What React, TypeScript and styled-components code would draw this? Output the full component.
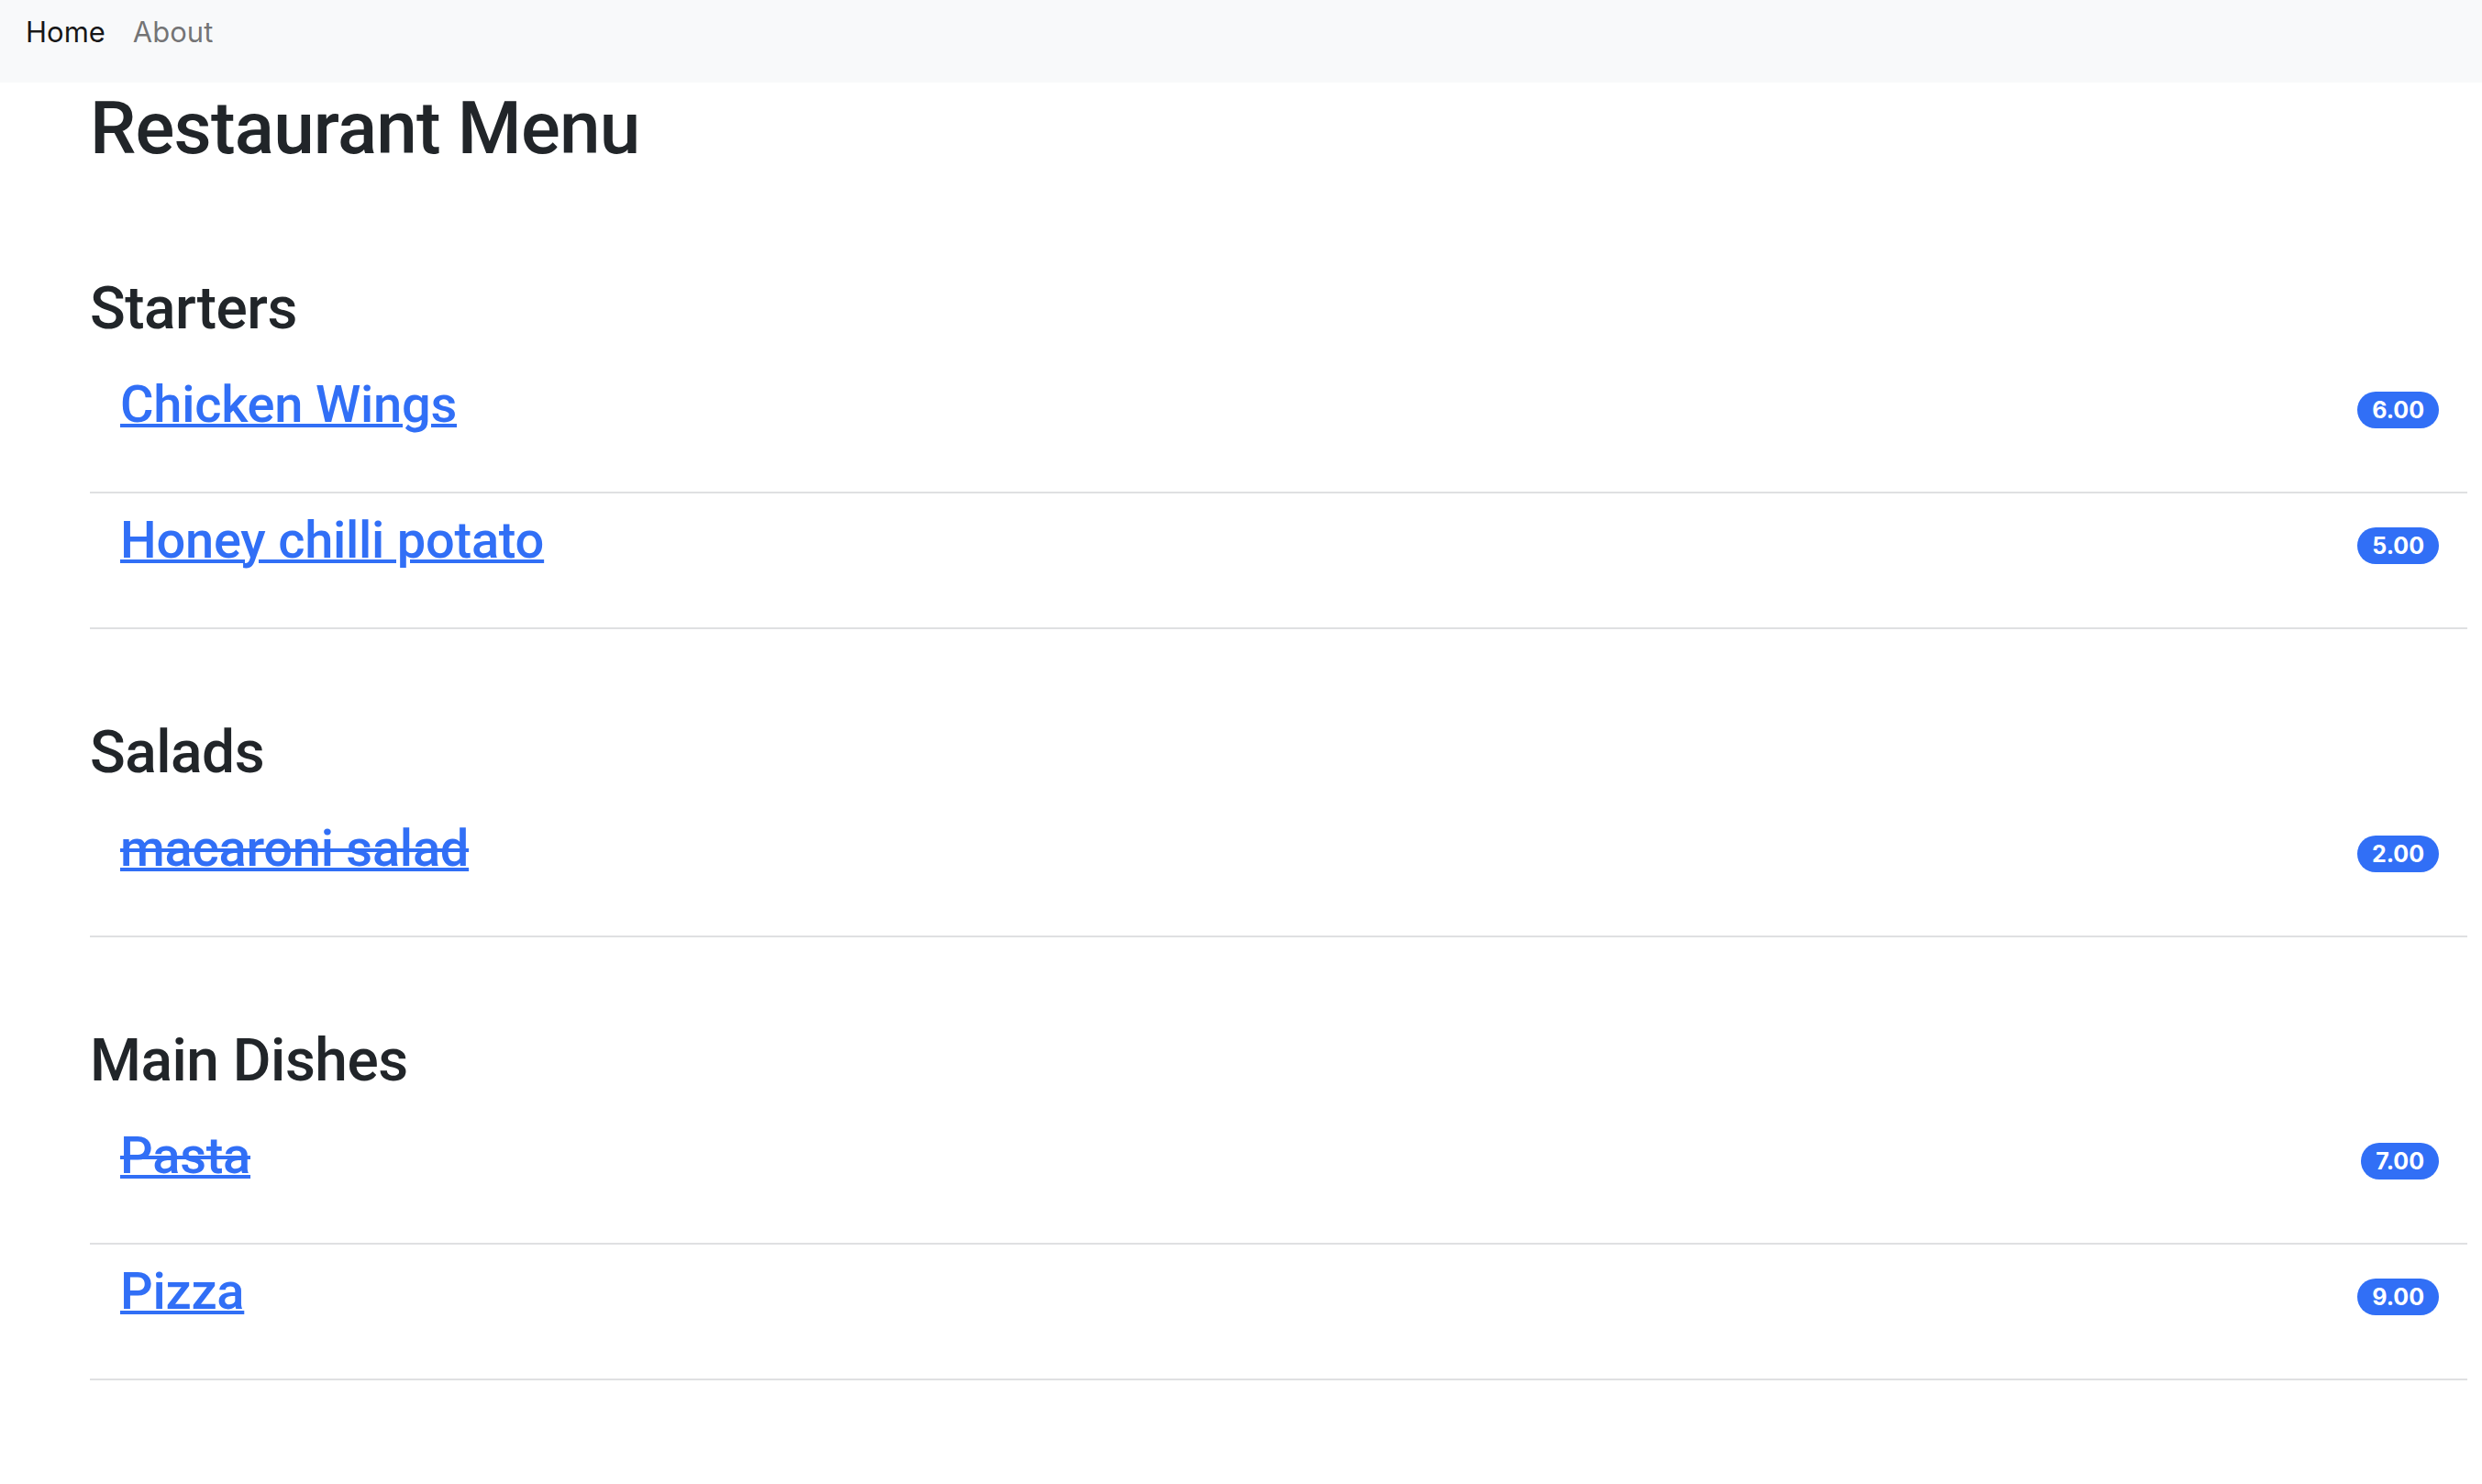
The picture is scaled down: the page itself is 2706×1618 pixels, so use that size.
import React from "react";
import styled, { createGlobalStyle } from "styled-components";

const GlobalStyle = createGlobalStyle`
  html, body { margin: 0; padding: 0; background: #ffffff; }
  body {
    font-family: Inter, "Noto Sans", "Liberation Sans", sans-serif;
    color: #212529;
  }
  * { box-sizing: border-box; }
`;

const headingFont = `Roboto, Inter, "Liberation Sans", sans-serif`;

const NavBar = styled.nav`
  height: 90px;
  background: #f8f9fa;
  display: flex;
  align-items: flex-start;
  padding: 17px 0 0 28px;
  gap: 30px;
`;

const NavLink = styled.a<{ $active?: boolean }>`
  font-size: 31px;
  line-height: 36px;
  text-decoration: none;
  color: ${(p) => (p.$active ? "rgba(0,0,0,0.92)" : "rgba(0,0,0,0.55)")};
  cursor: pointer;
`;

const Main = styled.main`
  padding: 0 16px 80px 98px;
`;

const Title = styled.h1`
  font-family: ${headingFont};
  font-size: 80px;
  font-weight: 500;
  line-height: 96px;
  letter-spacing: -0.8px;
  margin: 2px 0 14px 0;
`;

const Section = styled.section`
  padding-top: 97px;
`;

const SectionTitle = styled.h2`
  font-family: ${headingFont};
  font-size: 64px;
  font-weight: 500;
  line-height: 1.2;
  letter-spacing: -0.5px;
  margin: 0 0 14px 0;
`;

const List = styled.ul`
  list-style: none;
  margin: 0;
  padding: 0;
`;

const Item = styled.li`
  height: 148px;
  border-bottom: 2px solid #dfe0e2;
  padding: 18px 31px 0 33px;
`;

const ItemRow = styled.div`
  display: flex;
  align-items: flex-start;
  justify-content: space-between;
`;

const ItemName = styled.h3`
  font-family: ${headingFont};
  font-size: 56px;
  font-weight: 500;
  line-height: 1.2;
  letter-spacing: -0.25px;
  margin: 0;
`;

const ItemLink = styled.a<{ $unavailable?: boolean }>`
  color: #316ff6;
  text-decoration: ${(p) => (p.$unavailable ? "underline line-through" : "underline")};
  text-decoration-thickness: 4px;
  text-underline-offset: 2px;
  cursor: pointer;
`;

const Badge = styled.span`
  display: inline-flex;
  align-items: center;
  justify-content: center;
  height: 40px;
  padding: 0 16px;
  border-radius: 20px;
  background: #316ff6;
  color: #ffffff;
  font-size: 25px;
  font-weight: 700;
  margin-top: 19px;
`;

type Dish = { name: string; price: string; unavailable?: boolean };
type Category = { title: string; dishes: Dish[] };

const menu: Category[] = [
  {
    title: "Starters",
    dishes: [
      { name: "Chicken Wings", price: "6.00" },
      { name: "Honey chilli potato", price: "5.00" },
    ],
  },
  {
    title: "Salads",
    dishes: [{ name: "macaroni salad", price: "2.00", unavailable: true }],
  },
  {
    title: "Main Dishes",
    dishes: [
      { name: "Pasta", price: "7.00", unavailable: true },
      { name: "Pizza", price: "9.00" },
    ],
  },
];

export default function App() {
  return (
    <>
      <GlobalStyle />
      <NavBar>
        <NavLink $active>Home</NavLink>
        <NavLink>About</NavLink>
      </NavBar>
      <Main>
        <Title>Restaurant Menu</Title>
        {menu.map((cat) => (
          <Section key={cat.title}>
            <SectionTitle>{cat.title}</SectionTitle>
            <List>
              {cat.dishes.map((d) => (
                <Item key={d.name}>
                  <ItemRow>
                    <ItemName>
                      <ItemLink $unavailable={d.unavailable}>{d.name}</ItemLink>
                    </ItemName>
                    <Badge>{d.price}</Badge>
                  </ItemRow>
                </Item>
              ))}
            </List>
          </Section>
        ))}
      </Main>
    </>
  );
}
